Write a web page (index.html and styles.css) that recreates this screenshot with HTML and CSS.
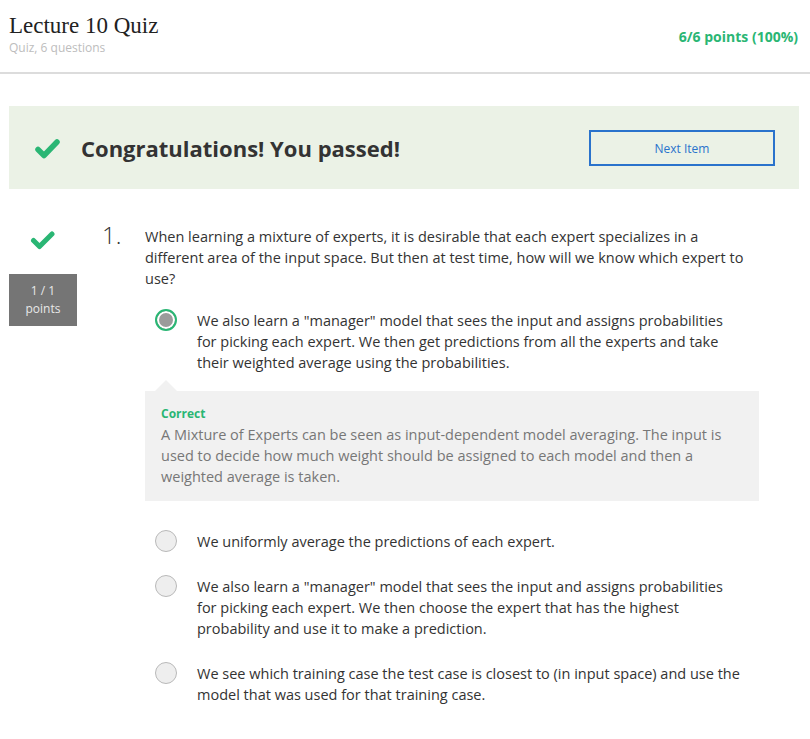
FILE: index.html
```html
<!DOCTYPE html>
<html>
<head>
<meta charset="utf-8">
<link rel="stylesheet" href="styles.css">
</head>
<body>
<header class="header">
  <div class="header-left">
    <h1 class="title">Lecture 10 Quiz</h1>
    <div class="subtitle">Quiz, 6 questions</div>
  </div>
  <div class="score">6/6 points (100%)</div>
</header>

<main class="page">
  <section class="banner">
    <svg class="banner-check" width="25" height="21" viewBox="0 0 25 21"><path d="M3 11.5 L9 17.5 L22 4" fill="none" stroke="#2ab674" stroke-width="5.5" stroke-linecap="round" stroke-linejoin="round"/></svg>
    <div class="banner-text">Congratulations! You passed!</div>
    <button class="next-btn">Next Item</button>
  </section>

  <section class="question">
    <aside class="q-side">
      <svg class="q-check" width="26" height="20" viewBox="0 0 26 20"><path d="M3.5 10.5 L9.5 16.5 L22 4" fill="none" stroke="#2ab674" stroke-width="5" stroke-linecap="round" stroke-linejoin="round"/></svg>
      <div class="q-points">1 / 1<br>points</div>
    </aside>
    <div class="q-num">1.</div>
    <div class="q-body">
      <p class="q-text">When learning a mixture of experts, it is desirable that each expert specializes in a different area of the input space. But then at test time, how will we know which expert to use?</p>

      <div class="option">
        <span class="radio radio-selected"></span>
        <span class="opt-text">We also learn a "manager" model that sees the input and assigns probabilities for picking each expert. We then get predictions from all the experts and take their weighted average using the probabilities.</span>
      </div>
      <div class="feedback">
        <div class="fb-label">Correct</div>
        <div class="fb-text">A Mixture of Experts can be seen as input-dependent model averaging. The input is used to decide how much weight should be assigned to each model and then a weighted average is taken.</div>
      </div>

      <div class="option">
        <span class="radio"></span>
        <span class="opt-text">We uniformly average the predictions of each expert.</span>
      </div>
      <div class="option">
        <span class="radio"></span>
        <span class="opt-text">We also learn a "manager" model that sees the input and assigns probabilities for picking each expert. We then choose the expert that has the highest probability and use it to make a prediction.</span>
      </div>
      <div class="option">
        <span class="radio"></span>
        <span class="opt-text">We see which training case the test case is closest to (in input space) and use the model that was used for that training case.</span>
      </div>
    </div>
  </section>
</main>
</body>
</html>
```

FILE: styles.css
```css
* { box-sizing: border-box; }
html, body { margin: 0; padding: 0; background: #fff; }
body {
  font-family: "Open Sans", "Liberation Sans", sans-serif;
  color: #333;
  font-size: 14.5px;
}
.header {
  display: flex;
  justify-content: space-between;
  align-items: center;
  height: 74px;
  padding: 0 12px 0 9px;
  border-bottom: 2px solid #dcdcdc;
}
.header-left { margin-top: -4px; }
.title {
  margin: 0;
  font-family: "Liberation Serif", "DejaVu Serif", serif;
  font-weight: normal;
  font-size: 23px;
  line-height: 28px;
  color: #222;
}
.subtitle {
  font-size: 12px;
  color: #bdbdbd;
  line-height: 16px;
  margin-top: 0;
}
.score {
  font-size: 14px;
  font-weight: bold;
  color: #2ab674;
  margin-top: 0;
}
.page {
  padding: 32px 11px 0 9px;
}
.banner {
  display: flex;
  align-items: center;
  height: 83px;
  background: #ebf2e6;
  padding: 0 24px 0 26px;
}
.banner-check { flex: none; margin-right: 21px; margin-top: 2px; }
.banner-text {
  flex: 1;
  font-size: 22px;
  font-weight: bold;
  color: #333;
}
.next-btn {
  width: 186px;
  height: 36px;
  background: transparent;
  border: 2px solid #2a73cc;
  color: #2a73cc;
  font-family: "Open Sans", "Liberation Sans", sans-serif;
  font-size: 12px;
  margin-top: 1px;
}
.question {
  display: flex;
  padding-top: 37px;
}
.q-side {
  width: 68px;
  flex: none;
  display: flex;
  flex-direction: column;
  align-items: center;
}
.q-check { margin-top: 4px; }
.q-points {
  margin-top: 24px;
  width: 68px;
  height: 52px;
  background: #757575;
  color: #e8e8e8;
  font-size: 12px;
  line-height: 18px;
  text-align: center;
  padding-top: 8px;
}
.q-num {
  width: 68px;
  flex: none;
  padding-left: 25px;
  font-size: 24px;
  font-weight: 300;
  line-height: 28px;
  color: #333;
  margin-top: -5px;
}
.q-body { width: 614px; flex: none; }
.q-text {
  margin: 0 0 21px;
  line-height: 21px;
}
.option {
  display: flex;
  align-items: flex-start;
  padding-left: 10px;
  padding-right: 14px;
  margin-bottom: 24px;
}
.radio {
  flex: none;
  width: 22px;
  height: 22px;
  border-radius: 50%;
  border: 1px solid #b9b9b9;
  background: #eee;
  margin-right: 20px;
  margin-top: -1px;
}
.radio-selected {
  border: 2.5px solid #2ab674;
  background: #9b9b9b;
  box-shadow: inset 0 0 0 2px #fff;
}
.opt-text { line-height: 21px; }
.feedback {
  position: relative;
  background: #f1f1f1;
  padding: 14px 16px 14px 16px;
  margin-top: -6px;
  margin-bottom: 30px;
}
.feedback::before {
  content: "";
  position: absolute;
  top: -11px;
  left: 10px;
  border-left: 11px solid transparent;
  border-right: 11px solid transparent;
  border-bottom: 11px solid #f1f1f1;
}
.fb-label {
  font-size: 12px;
  font-weight: bold;
  color: #2ab674;
  line-height: 18px;
}
.fb-text {
  color: #777;
  line-height: 21px;
  margin-top: 1px;
}
```
